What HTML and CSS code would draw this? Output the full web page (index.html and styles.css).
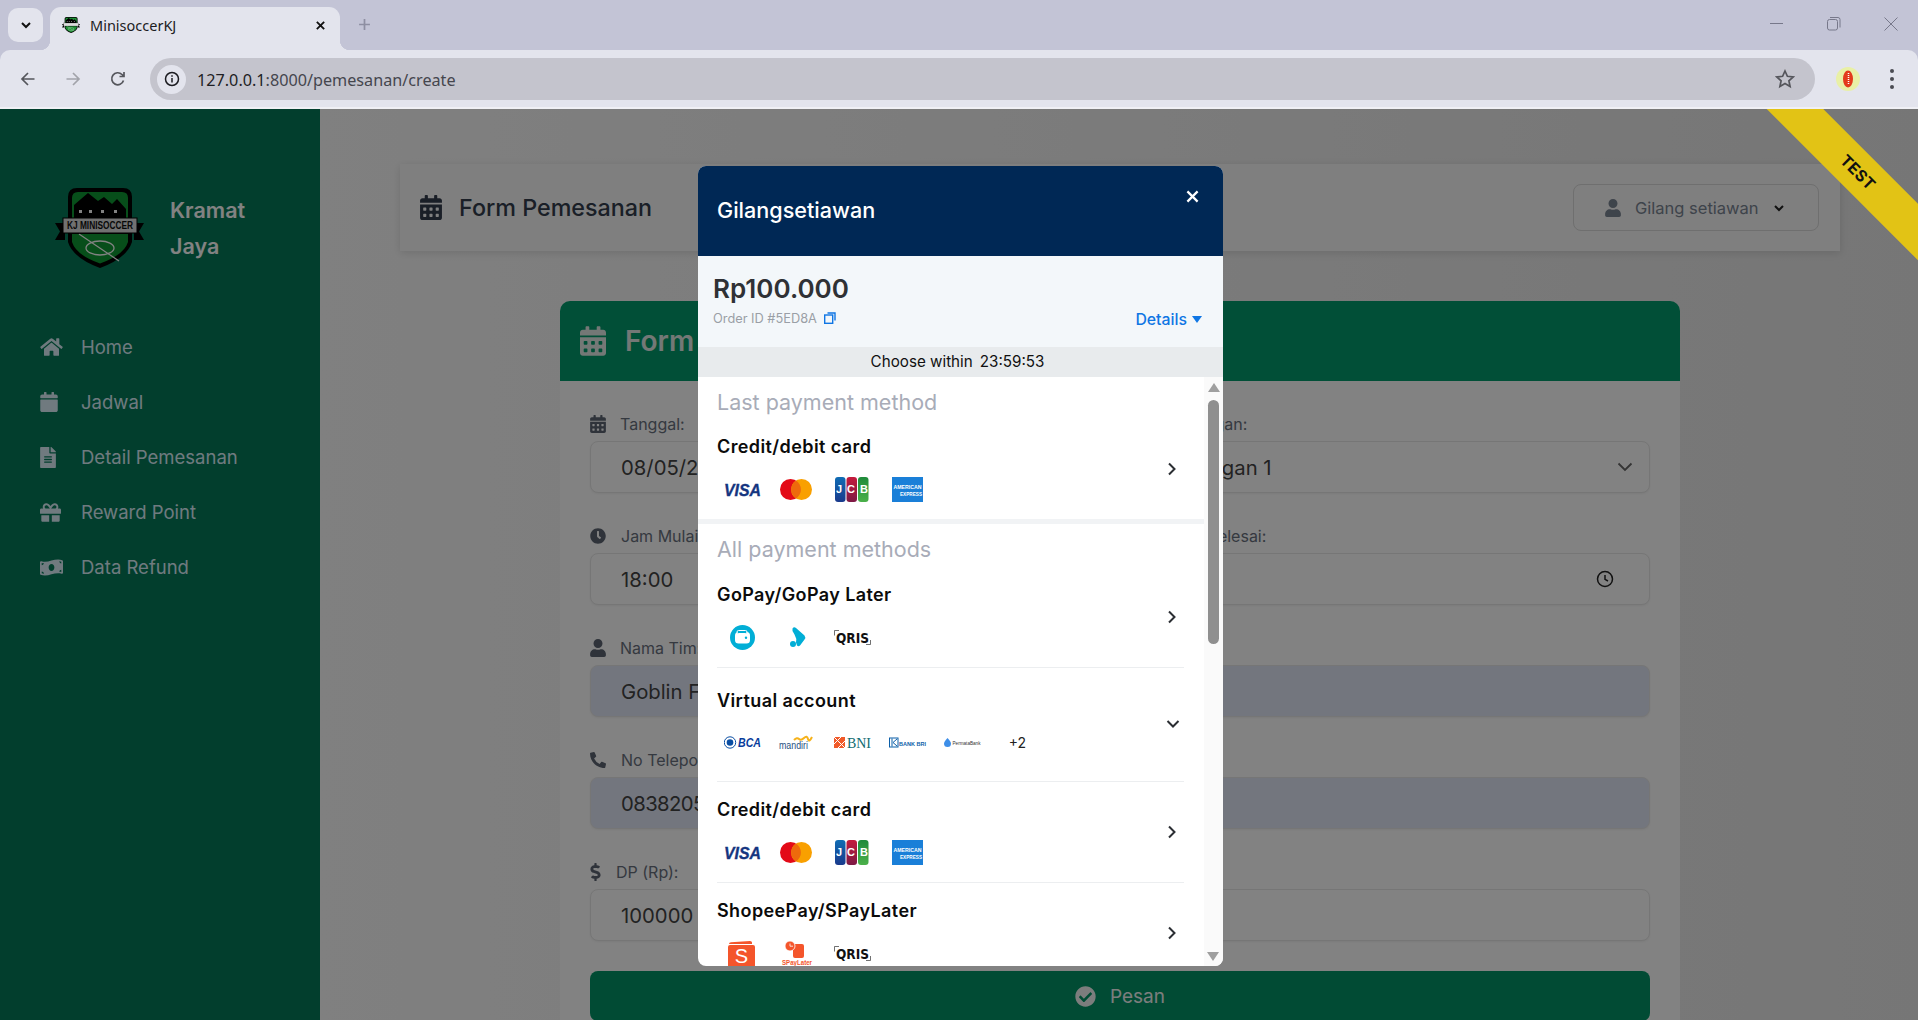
FILE: index.html
```html
<!DOCTYPE html>
<html lang="id">
<head>
<meta charset="utf-8">
<title>MinisoccerKJ</title>
<link rel="stylesheet" href="styles.css">
</head>
<body>
<svg class="sprites" aria-hidden="true">
  <symbol id="i-calendar-alt" viewBox="0 0 448 512"><path d="M0 464c0 26.5 21.5 48 48 48h352c26.5 0 48-21.5 48-48V192H0v272zm320-196c0-6.6 5.4-12 12-12h40c6.6 0 12 5.4 12 12v40c0 6.6-5.4 12-12 12h-40c-6.6 0-12-5.4-12-12v-40zm0 128c0-6.6 5.4-12 12-12h40c6.6 0 12 5.4 12 12v40c0 6.6-5.4 12-12 12h-40c-6.6 0-12-5.4-12-12v-40zM192 268c0-6.6 5.4-12 12-12h40c6.6 0 12 5.4 12 12v40c0 6.6-5.4 12-12 12h-40c-6.6 0-12-5.4-12-12v-40zm0 128c0-6.6 5.4-12 12-12h40c6.6 0 12 5.4 12 12v40c0 6.6-5.4 12-12 12h-40c-6.6 0-12-5.4-12-12v-40zM64 268c0-6.6 5.4-12 12-12h40c6.6 0 12 5.4 12 12v40c0 6.6-5.4 12-12 12H76c-6.6 0-12-5.4-12-12v-40zm0 128c0-6.6 5.4-12 12-12h40c6.6 0 12 5.4 12 12v40c0 6.6-5.4 12-12 12H76c-6.6 0-12-5.4-12-12v-40zM400 64h-48V16c0-8.8-7.2-16-16-16h-32c-8.8 0-16 7.2-16 16v48H160V16c0-8.8-7.2-16-16-16h-32c-8.8 0-16 7.2-16 16v48H48C21.5 64 0 85.5 0 112v48h448v-48c0-26.5-21.5-48-48-48z"/></symbol>
  <symbol id="i-calendar" viewBox="0 0 448 512"><path d="M12 192h424c6.6 0 12 5.4 12 12v260c0 26.5-21.5 48-48 48H48c-26.5 0-48-21.5-48-48V204c0-6.6 5.4-12 12-12zm436-44v-36c0-26.5-21.5-48-48-48h-48V12c0-6.6-5.4-12-12-12h-40c-6.6 0-12 5.4-12 12v52H160V12c0-6.6-5.4-12-12-12h-40c-6.6 0-12 5.4-12 12v52H48C21.5 64 0 85.5 0 112v36c0 6.6 5.4 12 12 12h424c6.6 0 12-5.4 12-12z"/></symbol>
  <symbol id="i-home" viewBox="0 0 576 512"><path d="M280.37 148.26L96 300.11V464a16 16 0 0 0 16 16l112.06-.29a16 16 0 0 0 15.92-16V368a16 16 0 0 1 16-16h64a16 16 0 0 1 16 16v95.64a16 16 0 0 0 16 16.05L464 480a16 16 0 0 0 16-16V300L295.67 148.26a12.19 12.19 0 0 0-15.3 0zM571.6 251.47L488 182.56V44.05a12 12 0 0 0-12-12h-56a12 12 0 0 0-12 12v72.61L318.47 43a48 48 0 0 0-61 0L4.34 251.47a12 12 0 0 0-1.6 16.9l25.5 31A12 12 0 0 0 45.15 301l235.22-193.74a12.19 12.19 0 0 1 15.3 0L530.9 301a12 12 0 0 0 16.9-1.6l25.5-31a12 12 0 0 0-1.7-16.93z"/></symbol>
  <symbol id="i-file" viewBox="0 0 384 512"><path d="M224 136V0H24C10.7 0 0 10.7 0 24v464c0 13.3 10.7 24 24 24h336c13.3 0 24-10.7 24-24V160H248c-13.2 0-24-10.8-24-24zm64 236c0 6.6-5.4 12-12 12H108c-6.6 0-12-5.4-12-12v-8c0-6.6 5.4-12 12-12h168c6.6 0 12 5.4 12 12v8zm0-64c0 6.6-5.4 12-12 12H108c-6.6 0-12-5.4-12-12v-8c0-6.6 5.4-12 12-12h168c6.6 0 12 5.4 12 12v8zm0-72v8c0 6.6-5.4 12-12 12H108c-6.6 0-12-5.4-12-12v-8c0-6.6 5.4-12 12-12h168c6.6 0 12 5.4 12 12zm96-114.1v6.1H256V0h6.1c6.4 0 12.5 2.5 17 7l97.9 98c4.5 4.5 7 10.6 7 16.9z"/></symbol>
  <symbol id="i-gift" viewBox="0 0 512 512"><path d="M32 448c0 17.7 14.3 32 32 32h160V320H32v128zm256 32h160c17.7 0 32-14.3 32-32V320H288v160zm192-320h-42.1c6.2-12.1 10.1-25.5 10.1-40 0-48.5-39.5-88-88-88-41.6 0-68.5 21.3-103 68.3-34.5-47-61.4-68.3-103-68.3-48.5 0-88 39.5-88 88 0 14.5 3.8 27.9 10.1 40H32c-17.7 0-32 14.3-32 32v80c0 8.8 7.2 16 16 16h480c8.8 0 16-7.2 16-16v-80c0-17.7-14.3-32-32-32zm-326.1 0c-22.1 0-40-17.9-40-40s17.9-40 40-40c19.9 0 34.6 3.3 86.1 80h-86.1zm206.1 0h-86.1c51.4-76.5 65.7-80 86.1-80 22.1 0 40 17.9 40 40s-17.9 40-40 40z"/></symbol>
  <symbol id="i-money" viewBox="0 0 640 512"><path d="M621.16 54.46C582.37 38.19 543.55 32 504.75 32c-123.17-.01-246.33 62.34-369.5 62.34-30.89 0-61.76-3.92-92.65-13.72-3.47-1.1-6.95-1.62-10.35-1.62C15.04 79 0 92.32 0 110.81v317.26c0 12.63 7.23 24.6 18.84 29.46C57.63 473.81 96.45 480 135.25 480c123.17 0 246.34-62.35 369.51-62.35 30.89 0 61.76 3.92 92.65 13.72 3.47 1.1 6.95 1.62 10.35 1.62 17.21 0 32.25-13.32 32.25-31.81V83.93c-.01-12.64-7.24-24.6-18.85-29.47zM48 132.22c20.12 5.04 41.12 7.57 62.72 8.93C104.84 170.54 79 192.69 48 192.69v-60.47zm0 285v-47.78c34.37 0 62.18 27.27 63.71 61.4-22.53-1.81-43.59-6.31-63.71-13.62zM320 352c-44.19 0-80-42.99-80-96 0-53.02 35.82-96 80-96s80 42.98 80 96c0 53.03-35.83 96-80 96zm272 27.78c-17.52-4.39-35.71-6.85-54.32-8.44 5.87-26.08 27.5-45.88 54.32-49.28v57.72zm0-236.11c-30.89-3.91-54.86-29.7-55.81-61.55 19.54 2.17 38.09 6.23 55.81 12.66v48.89z"/></symbol>
  <symbol id="i-clock" viewBox="0 0 512 512"><path d="M256,8C119,8,8,119,8,256S119,504,256,504,504,393,504,256,393,8,256,8Zm92.49,313h0l-20,25a16,16,0,0,1-22.49,2.5h0l-67-49.72a40,40,0,0,1-15-31.23V112a16,16,0,0,1,16-16h32a16,16,0,0,1,16,16V256l58,42.5A16,16,0,0,1,348.49,321Z"/></symbol>
  <symbol id="i-user" viewBox="0 0 448 512"><path d="M224 256c70.7 0 128-57.3 128-128S294.7 0 224 0 96 57.3 96 128s57.3 128 128 128zm89.6 32h-16.7c-22.2 10.2-46.9 16-72.9 16s-50.6-5.8-72.9-16h-16.7C60.2 288 0 348.2 0 422.4V464c0 26.5 21.5 48 48 48h352c26.5 0 48-21.5 48-48v-41.6c0-74.2-60.2-134.4-134.4-134.4z"/></symbol>
  <symbol id="i-phone" viewBox="0 0 512 512"><path d="M497.39 361.8l-112-48a24 24 0 0 0-28 6.9l-49.6 60.6A370.66 370.66 0 0 1 130.6 204.11l60.6-49.6a23.94 23.94 0 0 0 6.9-28l-48-112A24.16 24.16 0 0 0 122.6.61l-104 24A24 24 0 0 0 0 48c0 256.5 207.9 464 464 464a24 24 0 0 0 23.4-18.6l24-104a24.29 24.29 0 0 0-14.01-27.6z"/></symbol>
  <symbol id="i-dollar" viewBox="0 0 288 512"><path d="M209.2 233.4l-108-31.6C88.7 198.2 80 186.5 80 173.5c0-16.3 13.2-29.5 29.5-29.5h66.3c12.2 0 24.2 3.7 34.2 10.5 6.1 4.1 14.3 3.1 19.5-2l34.8-34c7.1-6.9 6.1-18.4-1.8-24.5C238 74.8 207.4 64.1 176 64V16c0-8.8-7.2-16-16-16h-32c-8.8 0-16 7.2-16 16v48h-2.5C45.8 64-5.4 118.7.5 183.6c4.2 46.1 39.4 83.6 83.8 96.6l102.5 30c12.5 3.7 21.2 15.3 21.2 28.3 0 16.3-13.2 29.5-29.5 29.5h-66.3C100 368 88 364.3 78 357.5c-6.1-4.1-14.3-3.1-19.5 2l-34.8 34c-7.1 6.9-6.1 18.4 1.8 24.5 24.5 19.2 55.1 29.9 86.5 30v48c0 8.8 7.2 16 16 16h32c8.8 0 16-7.2 16-16v-48.2c46.6-.9 90.3-28.6 105.7-72.7 21.5-61.6-14.6-124.8-72.5-141.7z"/></symbol>
  <symbol id="i-check" viewBox="0 0 512 512"><path d="M504 256c0 136.967-111.033 248-248 248S8 392.967 8 256 119.033 8 256 8s248 111.033 248 248zM227.314 387.314l184-184c6.248-6.248 6.248-16.379 0-22.627l-22.627-22.627c-6.248-6.249-16.379-6.249-22.628 0L216 308.118l-70.059-70.059c-6.248-6.248-16.379-6.248-22.628 0l-22.627 22.627c-6.248 6.248-6.248 16.379 0 22.627l104 104c6.249 6.249 16.379 6.249 22.628.001z"/></symbol>
  <symbol id="crest" viewBox="0 0 89 80">
    <path fill="#000" d="M22 0H68Q77 0 77 9V32H13V9Q13 0 22 0Z"/>
    <path fill="currentColor" d="M23 4H67Q73 4 73 10V30H17V10Q17 4 23 4Z"/>
    <path fill="#000" d="M19 30V17L33 5 43 13 49 9 57 16 62 11 71 21V30Z"/>
    <path fill="#fff" d="M24 22h3v3h-3zM34 22h3v3h-3zM46 22h3v3h-3zM59 22h3v3h-3z"/>
    <path fill="#000" d="M0 35H10V52H0L5 43.5ZM89 35H79V52H89L84 43.5Z"/>
    <path fill="#000" d="M13 40H77V54Q72 70 45 80 18 70 13 54Z"/>
    <path fill="currentColor" d="M17 46H73V54Q69 67 45 75.500 21 67 17 54Z"/>
    <ellipse cx="45" cy="60" rx="14" ry="7" fill="none" stroke="#fff" stroke-width="1.300"/>
    <path d="M24 46 64 73" fill="none" stroke="#fff" stroke-width="1.200"/>
    <rect x="8" y="30" width="74" height="15" fill="#ddd" stroke="#000"/>
  </symbol>
  <symbol id="l-mc" viewBox="0 0 37 25"><circle cx="11.500" cy="12.500" r="10.500" fill="#e30a17"/><circle cx="22.500" cy="12.500" r="10.500" fill="#f9a000"/><path d="M17 3.600a10.500 10.500 0 0 1 0 17.800 10.500 10.500 0 0 1 0-17.800Z" fill="#ee6a0c"/></symbol>
  <linearGradient id="g-jcb1" x1="0" y1="0" x2="0" y2="1"><stop offset="0" stop-color="#0f6cb4"/><stop offset="1" stop-color="#1a3a8c"/></linearGradient>
  <linearGradient id="g-jcb2" x1="0" y1="0" x2="0" y2="1"><stop offset="0" stop-color="#c41a3c"/><stop offset="1" stop-color="#7d1a45"/></linearGradient>
  <linearGradient id="g-jcb3" x1="0" y1="0" x2="0" y2="1"><stop offset="0" stop-color="#1f8a3a"/><stop offset="1" stop-color="#4bb04a"/></linearGradient>
  <symbol id="l-jcb" viewBox="0 0 37 25"><rect x="1" width="10.500" height="25" rx="3" fill="url(#g-jcb1)"/><rect x="12.500" width="10.500" height="25" rx="3" fill="url(#g-jcb2)"/><rect x="24" width="10.500" height="25" rx="3" fill="url(#g-jcb3)"/></symbol>
  <symbol id="l-amex" viewBox="0 0 37 25"><rect x="3" width="31" height="25" fill="#1a7fd8"/></symbol>
  <symbol id="l-gopay" viewBox="0 0 37 25"><circle cx="18.500" cy="12.500" r="12.500" fill="#01aed6"/><rect x="11" y="7" width="15" height="11.500" rx="3.500" fill="#fff"/><rect x="13" y="5.500" width="10" height="3" rx="1.500" fill="#01aed6" stroke="#fff"/><circle cx="22" cy="12.800" r="1.200" fill="#01aed6"/></symbol>
  <symbol id="l-gpl" viewBox="0 0 37 25"><path fill="#01aed6" d="M13.500 3.500Q15 1.500 17 3L25.500 10.500Q27 12.500 25.500 14.500L21 20.500Q19.500 22 18 20.500L17 17.500Q18 13.500 15.500 9.500L13.500 6Z"/><circle cx="14" cy="19" r="3" fill="#01aed6"/></symbol>
  <symbol id="l-qris" viewBox="0 0 37 25"><path d="M.5 10.500V5.500H5M36.500 15V19.500H32" fill="none" stroke="#333" stroke-width=".7"/></symbol>
  <symbol id="l-bca" viewBox="0 0 37 25"><circle cx="6" cy="12.500" r="5.700" fill="#fff" stroke="#0a4ea3"/><circle cx="6" cy="12.500" r="3.300" fill="#0a4ea3"/></symbol>
  <symbol id="l-mandiri" viewBox="0 0 37 25"><path d="M15 10q3-3 5-1t5-1 4 1 4-2" fill="none" stroke="#f6b21a" stroke-width="2"/></symbol>
  <symbol id="l-bni" viewBox="0 0 37 25"><rect y="7" width="11" height="11" fill="#f15a29"/><path d="M0 7 11 18M4 18 11 11M0 14 7 7" stroke="#fff" stroke-width="1"/></symbol>
  <symbol id="l-bri" viewBox="0 0 37 25"><rect x=".5" y="8" width="8.500" height="9" fill="#fff" stroke="#0b5ea8"/><path d="M3 8.500V16.500M8 9 4 12.500 8 16" fill="none" stroke="#0b5ea8"/></symbol>
  <symbol id="l-permata" viewBox="0 0 37 25"><path d="M3.500 8q3.500 3.500 3.500 5.500a3.500 3.500 0 0 1-7 0Q0 11.500 3.500 8Z" fill="#3d8ee8"/></symbol>
  <symbol id="l-shopee" viewBox="0 0 37 25"><path fill="#f4552b" d="M5 3q0-1.500 2-1.700L26 0q2 0 2 1.500V3Z"/><rect x="4" y="4" width="27" height="23" rx="2" fill="#f4552b"/></symbol>
  <symbol id="l-spl" viewBox="0 0 37 25"><rect x="14" y="3" width="11" height="14" rx="2" fill="#f4552b"/><circle cx="11" cy="5" r="5" fill="#f4552b" stroke="#fff" stroke-width=".8"/><path d="M11 2.500V5.200H14" fill="none" stroke="#fff" stroke-width=".8"/></symbol>
</svg>

<header class="tabstrip">
  <button class="tab-menu"><svg class="ic-12" viewBox="0 0 12 12"><path d="M2 4l4 4 4-4" class="st-black"/></svg></button>
  <div class="tab">
    <svg class="favicon"><use href="#crest"/></svg>
    <span class="tab-title">MinisoccerKJ</span>
    <svg class="ic-12 tab-close" viewBox="0 0 12 12"><path d="M2 2l8 8M10 2l-8 8" class="st-black"/></svg>
  </div>
  <svg class="tab-plus" viewBox="0 0 12 12"><path d="M6 1v10M1 6h10"/></svg>
  <div class="win-controls">
    <svg class="win-ic" viewBox="0 0 14 14"><path d="M0 6.500h13"/></svg>
    <svg class="win-ic" viewBox="0 0 14 14"><rect x=".5" y="2.500" width="10" height="10.500" rx="2"/><path d="M3 .5h8q2 0 2 2v8"/></svg>
    <svg class="win-ic" viewBox="0 0 14 14"><path d="M.5.500l13 13M13.500.500l-13 13"/></svg>
  </div>
</header>
<div class="toolbar">
  <svg class="nav-ic" viewBox="0 0 16 16"><path d="M14.500 8H2M8 2 2 8l6 6" class="st-dark"/></svg>
  <svg class="nav-ic" viewBox="0 0 16 16"><path d="M1.500 8H14M8 2l6 6-6 6" class="st-light"/></svg>
  <svg class="nav-ic" viewBox="0 0 16 16"><path d="M13.500 9.500A6 6 0 1 1 12 3.500L14 5.500M14 1v4.500H9.500" class="st-dark"/></svg>
  <div class="omnibox">
    <span class="info-chip"><svg viewBox="0 0 16 16" class="info-ic"><circle cx="8" cy="8" r="6.500"/><path d="M8 7v4.500M8 4.300v1.500"/></svg></span>
    <span class="url"><b>127.0.0.1</b>:8000/pemesanan/create</span>
    <svg class="star" viewBox="0 0 20 20"><path d="M10 2l2.400 5.300 5.800.6-4.300 3.900 1.200 5.700L10 14.600l-5.100 2.900 1.200-5.700L1.800 7.900l5.800-.6Z"/></svg>
  </div>
  <span class="ext"><svg viewBox="0 0 24 24"><circle cx="12" cy="12" r="12" fill="#e9f0a6"/><ellipse cx="12" cy="12" rx="5" ry="8.500" fill="#e33a1c"/><path d="M12.500 6v12" stroke="#fff" stroke-width="1.500" stroke-dasharray="1 1"/></svg></span>
  <span class="dots"><i></i><i></i><i></i></span>
</div>

<div class="page">
  <aside class="sidebar">
    <div class="brand">
      <svg class="brand-logo" viewBox="0 0 89 80"><use href="#crest"/><text x="45" y="41" text-anchor="middle" class="crest-text" textLength="66" lengthAdjust="spacingAndGlyphs">KJ MINISOCCER</text></svg>
      <div class="brand-name">Kramat<br>Jaya</div>
    </div>
    <nav class="nav">
      <a class="nav-item"><span class="nav-icon"><svg class="i-home"><use href="#i-home"/></svg></span>Home</a>
      <a class="nav-item"><span class="nav-icon"><svg class="i-cal"><use href="#i-calendar"/></svg></span>Jadwal</a>
      <a class="nav-item"><span class="nav-icon"><svg class="i-file"><use href="#i-file"/></svg></span>Detail Pemesanan</a>
      <a class="nav-item"><span class="nav-icon"><svg class="i-gift"><use href="#i-gift"/></svg></span>Reward Point</a>
      <a class="nav-item"><span class="nav-icon"><svg class="i-money"><use href="#i-money"/></svg></span>Data Refund</a>
    </nav>
  </aside>
  <main class="main">
    <div class="topbar">
      <h1 class="topbar-title"><svg class="topbar-ic"><use href="#i-calendar-alt"/></svg>Form Pemesanan</h1>
      <button class="user-btn"><svg class="user-ic"><use href="#i-user"/></svg><span>Gilang setiawan</span><svg class="user-caret" viewBox="0 0 12 12"><path d="M2 4l4 4 4-4"/></svg></button>
    </div>
    <section class="card">
      <div class="card-head"><svg class="card-ic"><use href="#i-calendar-alt"/></svg>Form Pemesanan</div>
      <div class="form">
        <div class="field">
          <label class="lbl"><svg class="lbl-ic"><use href="#i-calendar-alt"/></svg>Tanggal:</label>
          <div class="input">08/05/2024</div>
        </div>
        <div class="field">
          <label class="lbl lbl-r1"><svg class="lbl-ic"><use href="#i-user"/></svg>Lapangan:</label>
          <div class="input between">Lapangan 1<svg class="sel-caret" viewBox="0 0 16 10"><path d="M1.500 1.500 8 8l6.500-6.500"/></svg></div>
        </div>
        <div class="field">
          <label class="lbl lbl-w"><svg class="lbl-ic"><use href="#i-clock"/></svg>Jam Mulai:</label>
          <div class="input">18:00</div>
        </div>
        <div class="field">
          <label class="lbl lbl-r2"><svg class="lbl-ic"><use href="#i-clock"/></svg>Jam Selesai:</label>
          <div class="input between">19:00<svg class="time-ic" viewBox="0 0 18 18"><circle cx="9" cy="9" r="7.500"/><path d="M9 5v4.300l3 1.700"/></svg></div>
        </div>
        <div class="field full">
          <label class="lbl"><svg class="lbl-ic"><use href="#i-user"/></svg>Nama Tim:</label>
          <div class="input ro">Goblin FC</div>
        </div>
        <div class="field full">
          <label class="lbl lbl-w"><svg class="lbl-ic"><use href="#i-phone"/></svg>No Telepon:</label>
          <div class="input ro input-tel">083820512345</div>
        </div>
        <div class="field full">
          <label class="lbl lbl-w"><svg class="lbl-ic lbl-dollar"><use href="#i-dollar"/></svg>DP (Rp):</label>
          <div class="input">100000</div>
        </div>
        <button class="submit full"><svg class="submit-ic"><use href="#i-check"/></svg>Pesan</button>
      </div>
    </section>
  </main>
  <div class="backdrop"></div>
  <div class="ribbon">TEST</div>
</div>

<div class="modal">
  <div class="m-head">
    <span class="m-title">Gilangsetiawan</span>
    <svg class="m-close" viewBox="0 0 14 14"><path d="M1.500 1.500l11 11M12.500 1.500l-11 11"/></svg>
  </div>
  <div class="m-sum">
    <div>
      <div class="m-amount">Rp100.000</div>
      <div class="m-order">Order ID #5ED8A<svg class="m-copy" viewBox="0 0 12 12"><rect x=".7" y="3" width="8" height="8.300"/><path d="M3.500 1h7.500v7.500"/></svg></div>
    </div>
    <div class="m-details">Details<i class="m-tri"></i></div>
  </div>
  <div class="m-timer"><span>Choose within</span><span>23:59:53</span></div>
  <div class="m-body">
    <div class="m-list">
      <h2 class="m-sec">Last payment method</h2>
      <div class="pay pay-first">
        <div>
          <div class="pay-name">Credit/debit card</div>
          <div class="logos">
            <svg class="logo" viewBox="0 0 37 25"><text x="0" y="18.500" class="lg-visa" textLength="37" lengthAdjust="spacingAndGlyphs">VISA</text></svg>
            <svg class="logo"><use href="#l-mc"/></svg>
            <svg class="logo" viewBox="0 0 37 25"><use href="#l-jcb"/><text x="18" y="16" class="lg-jcb" textLength="32" lengthAdjust="spacing">JCB</text></svg>
            <svg class="logo" viewBox="0 0 37 25"><use href="#l-amex"/><text x="18.500" y="11.500" class="lg-amex" textLength="28" lengthAdjust="spacingAndGlyphs">AMERICAN</text><text x="33" y="18.500" class="lg-amex lg-amex2" textLength="22" lengthAdjust="spacingAndGlyphs">EXPRESS</text></svg>
          </div>
        </div>
        <svg class="chev" viewBox="0 0 10 14"><path d="M2 1.500 7.500 7 2 12.500"/></svg>
      </div>
      <div class="m-band"></div>
      <h2 class="m-sec">All payment methods</h2>
      <div class="pay pay-go">
        <div>
          <div class="pay-name">GoPay/GoPay Later</div>
          <div class="logos">
            <svg class="logo"><use href="#l-gopay"/></svg>
            <svg class="logo"><use href="#l-gpl"/></svg>
            <svg class="logo" viewBox="0 0 37 25"><use href="#l-qris"/><text x="2" y="17.500" class="lg-qris" textLength="33" lengthAdjust="spacingAndGlyphs">QRIS</text></svg>
          </div>
        </div>
        <svg class="chev" viewBox="0 0 10 14"><path d="M2 1.500 7.500 7 2 12.500"/></svg>
      </div>
      <div class="pay pay-va">
        <div>
          <div class="pay-name">Virtual account</div>
          <div class="logos">
            <svg class="logo" viewBox="0 0 37 25"><use href="#l-bca"/><text x="14" y="17" class="lg-bca" textLength="23" lengthAdjust="spacingAndGlyphs">BCA</text></svg>
            <svg class="logo" viewBox="0 0 37 25"><use href="#l-mandiri"/><text x="0" y="19" class="lg-mandiri" textLength="29" lengthAdjust="spacingAndGlyphs">mandiri</text></svg>
            <svg class="logo" viewBox="0 0 37 25"><use href="#l-bni"/><text x="13" y="18" class="lg-bni" textLength="24" lengthAdjust="spacingAndGlyphs">BNI</text></svg>
            <svg class="logo" viewBox="0 0 37 25"><use href="#l-bri"/><text x="10" y="15.500" class="lg-bri" textLength="27" lengthAdjust="spacingAndGlyphs">BANK BRI</text></svg>
            <svg class="logo" viewBox="0 0 37 25"><use href="#l-permata"/><text x="8.500" y="15" class="lg-perm" textLength="28" lengthAdjust="spacingAndGlyphs">PermataBank</text></svg>
            <span class="logo more">+2</span>
          </div>
        </div>
        <svg class="chev chev-down" viewBox="0 0 14 10"><path d="M1.500 2 7 7.500 12.500 2"/></svg>
      </div>
      <div class="pay">
        <div>
          <div class="pay-name">Credit/debit card</div>
          <div class="logos">
            <svg class="logo" viewBox="0 0 37 25"><text x="0" y="18.500" class="lg-visa" textLength="37" lengthAdjust="spacingAndGlyphs">VISA</text></svg>
            <svg class="logo"><use href="#l-mc"/></svg>
            <svg class="logo" viewBox="0 0 37 25"><use href="#l-jcb"/><text x="18" y="16" class="lg-jcb" textLength="32" lengthAdjust="spacing">JCB</text></svg>
            <svg class="logo" viewBox="0 0 37 25"><use href="#l-amex"/><text x="18.500" y="11.500" class="lg-amex" textLength="28" lengthAdjust="spacingAndGlyphs">AMERICAN</text><text x="33" y="18.500" class="lg-amex lg-amex2" textLength="22" lengthAdjust="spacingAndGlyphs">EXPRESS</text></svg>
          </div>
        </div>
        <svg class="chev" viewBox="0 0 10 14"><path d="M2 1.500 7.500 7 2 12.500"/></svg>
      </div>
      <div class="pay">
        <div>
          <div class="pay-name">ShopeePay/SPayLater</div>
          <div class="logos">
            <svg class="logo" viewBox="0 0 37 25"><use href="#l-shopee"/><text x="17.500" y="22" class="lg-shopee">S</text></svg>
            <svg class="logo" viewBox="0 0 37 25"><use href="#l-spl"/><text x="18" y="24" class="lg-spl" textLength="30" lengthAdjust="spacingAndGlyphs">SPayLater</text></svg>
            <svg class="logo" viewBox="0 0 37 25"><use href="#l-qris"/><text x="2" y="17.500" class="lg-qris" textLength="33" lengthAdjust="spacingAndGlyphs">QRIS</text></svg>
          </div>
        </div>
        <svg class="chev" viewBox="0 0 10 14"><path d="M2 1.500 7.500 7 2 12.500"/></svg>
      </div>
    </div>
    <div class="m-scroll">
      <i class="sb-up"></i>
      <i class="sb-thumb"></i>
      <i class="sb-down"></i>
    </div>
  </div>
</div>
</body>
</html>
```

FILE: styles.css
```css
* { box-sizing: border-box; }
html, body { margin: 0; height: 1020px; overflow: hidden; }
body { width: 1918px; position: relative; font-family: "Inter", "Liberation Sans", sans-serif; background: #c3c4d6; }
.sprites { position: absolute; width: 0; height: 0; }
button { font: inherit; border: 0; background: none; padding: 0; }
svg { display: block; fill: currentColor; }

/* browser chrome */
.tabstrip { height: 50px; background: #c3c4d6; display: flex; align-items: flex-end; padding-left: 8px; position: relative; }
.tab-menu { width: 35px; height: 34px; margin-bottom: 8px; border-radius: 10px; background: #e3e4ed; display: flex; align-items: center; justify-content: center; }
.ic-12 { width: 12px; height: 12px; }
.st-black { fill: none; stroke: #111; stroke-width: 2; }
.st-dark { fill: none; stroke: #55565c; stroke-width: 1.700; }
.st-light { fill: none; stroke: #a2a3aa; stroke-width: 1.700; }
.tab { width: 290px; height: 43px; margin-left: 7px; background: #e3e4ed; border-radius: 11px 11px 0 0; display: flex; align-items: center; padding: 0 14px 7px 12px; color: #1c1c22; position: relative; }
.tab::before, .tab::after { content: ""; position: absolute; bottom: 0; width: 10px; height: 10px; }
.tab::before { left: -10px; background: radial-gradient(circle at 0 0, transparent 10px, #e3e4ed 10.500px); }
.tab::after { right: -10px; background: radial-gradient(circle at 100% 0, transparent 10px, #e3e4ed 10.500px); }
.favicon { width: 18px; height: 18px; color: #1f8f35; flex: none; }
.tab-title { font: 14.500px/18px "Noto Sans", sans-serif; margin-left: 10px; flex: 1; }
.tab-close { width: 11px; height: 11px; }
.tab-plus { width: 13px; height: 13px; margin: 0 0 19px 18px; fill: none; stroke: #8e8fa2; stroke-width: 1.600; }
.win-controls { margin-left: auto; display: flex; gap: 43px; padding: 0 20px 19px 0; align-items: center; }
.win-ic { width: 14px; height: 14px; fill: none; stroke: #77788a; stroke-width: 1; }

.toolbar { height: 59px; background: #e3e4ed; border-bottom: 2px solid #f0f0f5; border-top-left-radius: 10px; border-top-right-radius: 10px; display: flex; align-items: center; padding: 1px 24px 0 20px; }
.nav-ic { width: 16px; height: 16px; margin-right: 29px; flex: none; }
.nav-ic:nth-of-type(3) { margin-right: 24px; }
.omnibox { flex: 1; height: 42px; background: #c4c4cd; border-radius: 21px; display: flex; align-items: center; padding: 0 20px 0 7px; color: #222; }
.info-chip { width: 29px; height: 29px; border-radius: 50%; background: #e3e4ed; display: flex; align-items: center; justify-content: center; flex: none; }
.info-ic { width: 16px; height: 16px; fill: none; stroke: #1b1b20; stroke-width: 1.500; }
.url { font: 16.200px/20px "Noto Sans", sans-serif; margin-left: 11px; padding-top: 1px; flex: 1; color: #45464d; }
.url b { font-weight: 400; color: #1e1e24; }
.star { width: 20px; height: 20px; fill: none; stroke: #55565c; stroke-width: 1.700; }
.ext { width: 24px; height: 24px; margin-left: 21px; flex: none; }
.dots { display: flex; flex-direction: column; gap: 4px; margin-left: 30px; }
.dots i { width: 4px; height: 4px; border-radius: 50%; background: #4a4b52; }

/* page */
.page { height: 911px; display: flex; position: relative; overflow: hidden; }
.backdrop { position: absolute; inset: 0; background: rgba(0,0,0,.49); }
.ribbon { position: absolute; top: 43px; right: -90px; width: 300px; height: 40px; background: #e2c315; transform: rotate(45deg); display: flex; align-items: center; justify-content: center; font: 700 16px "Inter", sans-serif; color: #111; }

.sidebar { width: 320px; flex: none; background: #047a58; }
.brand { display: flex; align-items: center; padding: 79px 0 0 55px; }
.brand-logo { width: 89px; height: 80px; color: #0f9a33; flex: none; }
.brand-name { margin: 0 0 0 26px; font: 600 21.500px/36px "Inter", sans-serif; color: #fff; }
.nav { margin-top: 59px; display: flex; flex-direction: column; gap: 15px; padding-left: 40px; }
.nav-item { height: 40px; display: flex; align-items: center; font: 400 18.500px "Inter", sans-serif; color: #dbf0fa; }
.nav-icon { width: 41px; flex: none; }
.i-home { width: 23px; height: 20px; }
.i-cal { width: 18px; height: 20px; }
.i-file { width: 16px; height: 21px; }
.i-gift { width: 21px; height: 21px; }
.i-money { width: 23px; height: 19px; }

.main { flex: 1; padding: 55px 78px 0 80px; background: linear-gradient(90deg, #fbfbfb, #e8e8e8); min-width: 0; }
.topbar { height: 87px; background: #f9f9f9; box-shadow: 0 2px 8px rgba(0,0,0,.12); display: flex; align-items: center; justify-content: space-between; padding: 0 21px 0 20px; }
.topbar-title { margin: 0; display: flex; align-items: center; font: 500 23.300px "Inter", sans-serif; color: #333d4d; }
.topbar-ic { width: 22px; height: 25px; margin-right: 17px; }
.user-btn { width: 246px; height: 47px; border: 1px solid #d9d9d9; border-radius: 8px; display: flex; align-items: center; padding-left: 31px; color: #7b8593; font-size: 16.500px; }
.user-ic { width: 16px; height: 18px; margin-right: 14px; }
.user-caret { width: 12px; height: 12px; margin-left: 14px; fill: none; stroke: #222; stroke-width: 2; }

.card { margin: 50px 0 0 160px; width: 1120px; }
.card-head { height: 80px; background: #029b6c; border-radius: 10px 10px 0 0; display: flex; align-items: center; padding-left: 20px; color: #e4ece8; font: 600 28px "Inter", sans-serif; white-space: nowrap; }
.card-ic { width: 26px; height: 30px; margin-right: 19px; }
.form { background: #fff; padding: 29px 30px 0 30px; display: grid; grid-template-columns: 1fr 1fr; column-gap: 24px; row-gap: 29px; height: 640px; align-content: start; }
.field.full, .submit.full { grid-column: 1 / -1; }
.lbl { height: 31px; padding-bottom: 3px; display: flex; align-items: center; gap: 14px; font: 400 16px "Inter", sans-serif; color: #69717e; }
.lbl-w { gap: 15px; }
.lbl-r1 { gap: 20px; }
.lbl-r2 { gap: 23px; }
.lbl-ic { width: 16px; height: 18px; color: #5c6573; flex: none; }
.lbl-dollar { width: 11px; }
.input { height: 52px; border: 1px solid #e8e8e8; border-radius: 8px; background: #fff; box-shadow: 0 1px 2px rgba(0,0,0,.05); padding: 0 30px; font: 400 20.300px "Inter", sans-serif; color: #444; display: flex; align-items: center; overflow: hidden; white-space: nowrap; }
.input.ro { background: #e2e8f8; }
.input-tel { letter-spacing: -.6px; }
.between { justify-content: space-between; }
.sel-caret { width: 16px; height: 10px; fill: none; stroke: #666; stroke-width: 1.800; margin-right: -14px; }
.time-ic { width: 18px; height: 18px; fill: none; stroke: #222; stroke-width: 1.500; margin-right: 5px; }
.submit { margin-top: 1px; height: 50px; background: #029466; border-radius: 8px; color: #f3f6f5; display: flex; align-items: center; justify-content: center; gap: 14px; font: 400 19px "Inter", sans-serif; }
.submit-ic { width: 21px; height: 21px; }

/* payment popup */
.modal { position: absolute; left: 698px; top: 166px; width: 525px; height: 800px; border-radius: 8px; overflow: hidden; background: #fff; display: flex; flex-direction: column; }
.m-head { height: 90px; flex: none; background: #002855; position: relative; padding-left: 19px; display: flex; align-items: center; }
.m-title { font: 500 21.600px "Inter", sans-serif; color: #fff; margin-top: -2px; }
.m-close { position: absolute; right: 24px; top: 24px; width: 13px; height: 13px; fill: none; stroke: #fff; stroke-width: 2.400; }
.m-sum { height: 91px; flex: none; background: #f3f7fa; display: flex; justify-content: space-between; padding: 17px 21px 0 15px; }
.m-amount { font: 600 26px/32px "Inter", sans-serif; color: #2f3135; }
.m-order { margin-top: 7px; display: flex; align-items: center; gap: 7px; font: 400 12.800px/14px "Inter", sans-serif; color: #9a9fa6; }
.m-copy { width: 12px; height: 12px; fill: none; stroke: #0f76e4; stroke-width: 1.400; margin-top: -3px; }
.m-details { align-self: flex-end; margin-bottom: 18px; display: flex; align-items: center; gap: 5px; font: 500 15.800px "Inter", sans-serif; color: #0f76e4; }
.m-tri { width: 0; height: 0; border: 5px solid transparent; border-top: 7px solid #0f76e4; border-bottom: 0; }
.m-timer { height: 30px; flex: none; background: #e8ebed; display: flex; align-items: center; justify-content: center; gap: 7px; font: 400 15.200px "Inter", sans-serif; color: #111; padding: 0 6px 1px 0; }
.m-body { flex: 1; min-height: 0; display: flex; overflow: hidden; }
.m-list { width: 506px; flex: none; }
.m-sec { margin: 0 0 0 19px; padding-top: 10px; height: 40px; font: 400 21.500px/30px "Inter", sans-serif; color: #a8acb8; }
.m-band { height: 5px; background: #f1f3f5; }
.pay { margin: 0 20px 0 19px; display: flex; align-items: center; justify-content: space-between; border-bottom: 1px solid #eceef0; padding: 16px 7px 17px 0; }
.pay-first { border-bottom: 0; padding-top: 18px; }
.pay-go { padding-top: 19px; }
.pay-va { padding: 21px 4px 26px 0; }
.pay-va .logos { margin-top: 17px; }
.pay-name { font: 600 18px/24px "Inter", sans-serif; color: #0b0b0b; letter-spacing: .4px; white-space: nowrap; }
.logos { margin-top: 18px; padding-left: 7px; display: flex; gap: 18px; align-items: center; }
.logo { width: 37px; height: 25px; flex: none; overflow: visible; }
.more { font: 400 14px/25px "Inter", sans-serif; color: #222; text-align: center; }
.chev { width: 10px; height: 14px; fill: none; stroke: #2b2e33; stroke-width: 2; flex: none; }
.chev-down { width: 14px; height: 10px; margin-top: 4px; }

.m-scroll { flex: 1; background: #fafafa; display: flex; flex-direction: column; align-items: center; padding-top: 6px; position: relative; }
.sb-up { width: 0; height: 0; border: 6.500px solid transparent; border-bottom: 9px solid #9f9f9f; border-top: 0; flex: none; }
.sb-thumb { width: 11px; height: 244px; margin-top: 8px; background: #8f8f8f; border-radius: 6px; flex: none; }
.sb-down { position: absolute; bottom: 5px; left: 3px; width: 0; height: 0; border: 6.500px solid transparent; border-top: 9px solid #9f9f9f; border-bottom: 0; }

/* svg logo text */
.crest-text { font: 700 10px "Liberation Sans", sans-serif; fill: #111; }
.lg-visa { font: italic 700 17px "Liberation Sans", sans-serif; fill: #15357f; stroke: #15357f; stroke-width: .35; }
.lg-jcb { font: 700 11px "Liberation Sans", sans-serif; fill: #fff; text-anchor: middle; }
.lg-amex { font: 700 5.500px "Liberation Sans", sans-serif; fill: #fff; text-anchor: middle; }
.lg-amex2 { text-anchor: end; }
.lg-qris { font: 700 14px "DejaVu Sans", sans-serif; fill: #111; }
.lg-bca { font: italic 700 12px "Liberation Sans", sans-serif; fill: #0a3d9c; }
.lg-mandiri { font: 400 10.500px "Liberation Sans", sans-serif; fill: #28507f; }
.lg-bni { font: 400 14px "Liberation Serif", serif; fill: #0e6b70; }
.lg-bri { font: 700 5.500px "Liberation Sans", sans-serif; fill: #0b5ea8; }
.lg-perm { font: 400 4.500px "Liberation Sans", sans-serif; fill: #333; }
.lg-shopee { font: 400 20px "Liberation Sans", sans-serif; fill: #fff; text-anchor: middle; }
.lg-spl { font: 700 6.500px "Liberation Sans", sans-serif; fill: #f4552b; text-anchor: middle; }
```
